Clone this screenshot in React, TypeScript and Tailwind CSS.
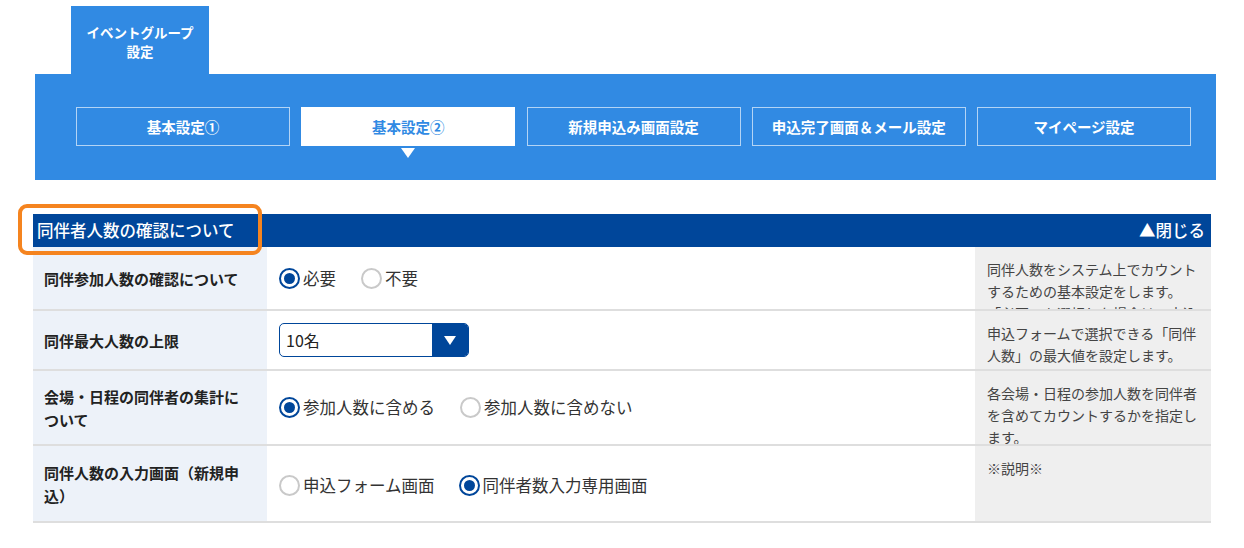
import React from "react";

const FONT = { fontFamily: '"Noto Sans CJK JP", "Noto Sans", sans-serif' };

const TABS = ["基本設定①", "基本設定②", "新規申込み画面設定", "申込完了画面＆メール設定", "マイページ設定"];

function Radio({ checked, label }: { checked: boolean; label: string }) {
  return (
    <label className="flex items-center gap-[3px] text-[16.5px] text-[#333]">
      {checked ? (
        <span className="w-[21px] h-[21px] rounded-full border-[2.5px] border-[#00469a] flex items-center justify-center">
          <span className="w-[11px] h-[11px] rounded-full bg-[#00469a]" />
        </span>
      ) : (
        <span className="w-[21px] h-[21px] rounded-full border-2 border-[#c9c9c9] bg-white" />
      )}
      <span>{label}</span>
    </label>
  );
}

function Row({ label, children, desc, h }: { label: React.ReactNode; children: React.ReactNode; desc: string; h: string }) {
  return (
    <div className={`grid grid-cols-[234px_708px_236px] border-b-2 border-[#dedede] ${h}`}>
      <div className="bg-[#edf2f9] flex items-center px-[11px] text-[15px] font-bold leading-[23px] text-[#222]">{label}</div>
      <div className="bg-white flex items-center pl-[12px]">{children}</div>
      <div className="bg-[#efefef] overflow-hidden px-[12px] pt-[11px] text-[14px] leading-[22px] text-[#444]">{desc}</div>
    </div>
  );
}

export default function App() {
  return (
    <div className="w-[1244px] h-[548px] bg-white overflow-hidden" style={FONT}>
      <div className="pt-[6px] ml-[35px] w-[1181px]">
        <div className="ml-[36px] w-[138px] h-[68px] bg-[#318ae3] flex flex-col items-center justify-center text-white font-bold text-[13.5px] leading-[19px] text-center pt-[4px]">
          <span>イベントグループ</span>
          <span>設定</span>
        </div>
        <div className="h-[106px] bg-[#318ae3] pl-[41px] pt-[33px] flex gap-[11.25px]">
          {TABS.map((t, i) =>
            i === 1 ? (
              <div key={t} className="relative w-[214px] h-[39px] bg-white flex items-center justify-center text-[14.5px] font-bold text-[#318ae3]">
                {t}
                <span className="absolute left-1/2 -translate-x-1/2 top-[41px] w-0 h-0 border-l-[7px] border-r-[7px] border-t-[10px] border-l-transparent border-r-transparent border-t-white" />
              </div>
            ) : (
              <div key={t} className="w-[214px] h-[39px] border border-[#b3d4f5] flex items-center justify-center text-[14.5px] font-bold text-white">
                {t}
              </div>
            )
          )}
        </div>
      </div>

      <div className="ml-[33px] mt-[34px] w-[1178px]">
        <div className="relative h-[33px] bg-[#00469a] flex items-center justify-between pl-[4px] pr-[6px] text-white text-[16.5px] font-medium">
          <span>同伴者人数の確認について</span>
          <span>▲閉じる</span>
          <span className="absolute left-[-15px] top-[-10px] w-[244px] h-[51px] border-4 border-[#f5841f] rounded-[9px]" />
        </div>

        <Row
          h="h-[64px]"
          label="同伴参加人数の確認について"
          desc="同伴人数をシステム上でカウントするための基本設定をします。「必要」を選択した場合は、申込フォームで同伴人数を入力できます。"
        >
          <div className="flex items-center gap-[25px]">
            <Radio checked label="必要" />
            <Radio checked={false} label="不要" />
          </div>
        </Row>

        <Row h="h-[60px]" label="同伴最大人数の上限" desc="申込フォームで選択できる「同伴人数」の最大値を設定します。">
          <div className="w-[190px] h-[34px] border border-[#00469a] rounded-[5px] flex overflow-hidden">
            <div className="flex-1 flex items-center pl-[6px] text-[16px] text-[#222]">10名</div>
            <div className="w-[36px] bg-[#00469a] flex items-center justify-center">
              <span className="w-0 h-0 border-l-[6px] border-r-[6px] border-t-[9px] border-l-transparent border-r-transparent border-t-white" />
            </div>
          </div>
        </Row>

        <Row
          h="h-[75px]"
          label={<span>会場・日程の同伴者の集計に<br />ついて</span>}
          desc="各会場・日程の参加人数を同伴者を含めてカウントするかを指定します。"
        >
          <div className="flex items-center gap-[25px]">
            <Radio checked label="参加人数に含める" />
            <Radio checked={false} label="参加人数に含めない" />
          </div>
        </Row>

        <Row
          h="h-[77px]"
          label={<span>同伴人数の入力画面（新規申<br />込）</span>}
          desc="※説明※"
        >
          <div className="flex items-center gap-[24px] pt-[4px]">
            <Radio checked={false} label="申込フォーム画面" />
            <Radio checked label="同伴者数入力専用画面" />
          </div>
        </Row>
      </div>
    </div>
  );
}
